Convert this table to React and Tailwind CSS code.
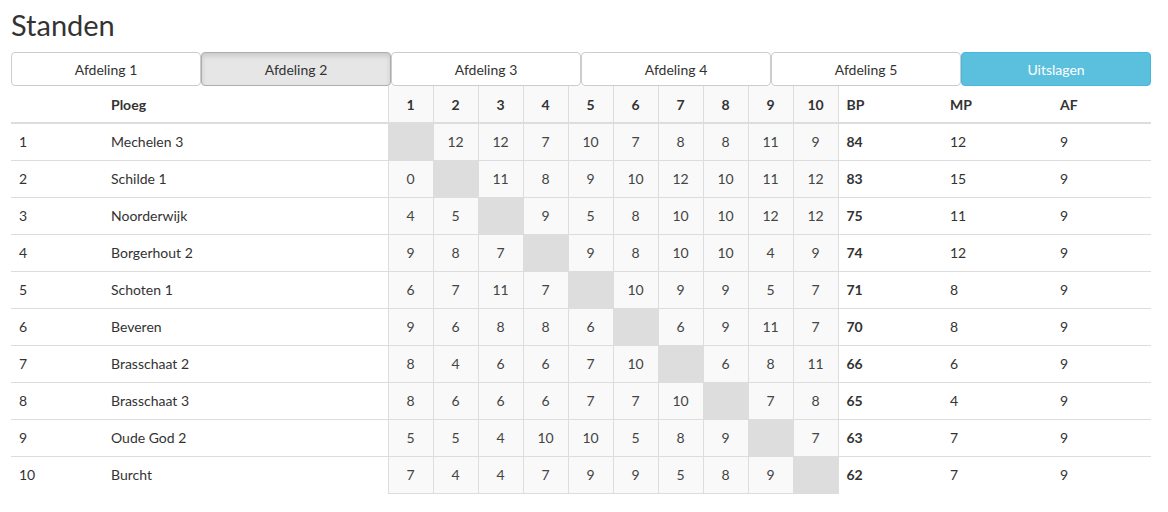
import React from 'react';

const tabs = ['Afdeling 1', 'Afdeling 2', 'Afdeling 3', 'Afdeling 4', 'Afdeling 5'];

const rows = [
  { nr: 1, ploeg: 'Mechelen 3', s: [null, 12, 12, 7, 10, 7, 8, 8, 11, 9], bp: 84, mp: 12, af: 9 },
  { nr: 2, ploeg: 'Schilde 1', s: [0, null, 11, 8, 9, 10, 12, 10, 11, 12], bp: 83, mp: 15, af: 9 },
  { nr: 3, ploeg: 'Noorderwijk', s: [4, 5, null, 9, 5, 8, 10, 10, 12, 12], bp: 75, mp: 11, af: 9 },
  { nr: 4, ploeg: 'Borgerhout 2', s: [9, 8, 7, null, 9, 8, 10, 10, 4, 9], bp: 74, mp: 12, af: 9 },
  { nr: 5, ploeg: 'Schoten 1', s: [6, 7, 11, 7, null, 10, 9, 9, 5, 7], bp: 71, mp: 8, af: 9 },
  { nr: 6, ploeg: 'Beveren', s: [9, 6, 8, 8, 6, null, 6, 9, 11, 7], bp: 70, mp: 8, af: 9 },
  { nr: 7, ploeg: 'Brasschaat 2', s: [8, 4, 6, 6, 7, 10, null, 6, 8, 11], bp: 66, mp: 6, af: 9 },
  { nr: 8, ploeg: 'Brasschaat 3', s: [8, 6, 6, 6, 7, 7, 10, null, 7, 8], bp: 65, mp: 4, af: 9 },
  { nr: 9, ploeg: 'Oude God 2', s: [5, 5, 4, 10, 10, 5, 8, 9, null, 7], bp: 63, mp: 7, af: 9 },
  { nr: 10, ploeg: 'Burcht', s: [7, 4, 4, 7, 9, 9, 5, 8, 9, null], bp: 62, mp: 7, af: 9 },
];

const cols = [1, 2, 3, 4, 5, 6, 7, 8, 9, 10];

export default function App() {
  return (
    <div className="bg-white px-[11px] pt-[6px] text-[#333] text-[14px]" style={{ fontFamily: 'Lato, "Open Sans", sans-serif' }}>
      <h1 className="text-[29px] leading-[38px] font-normal mb-[8px]">Standen</h1>

      {/* tabs */}
      <div className="flex w-[1140px]">
        {tabs.map((t, i) => (
          <div
            key={t}
            className={
              i === 1
                ? 'w-[190px] h-[34px] flex items-center justify-center rounded-[4px] border border-[#adadad] bg-[#e6e6e6] shadow-[inset_0_3px_5px_rgba(0,0,0,0.125)]'
                : 'w-[190px] h-[34px] flex items-center justify-center rounded-[4px] border border-[#ccc] bg-white'
            }
          >
            {t}
          </div>
        ))}
        <div className="w-[190px] h-[34px] flex items-center justify-center rounded-[4px] border border-[#46b8da] bg-[#5bc0de] text-white">
          Uitslagen
        </div>
      </div>

      <table className="table-fixed border-collapse w-[1140px]">
        <colgroup>
          <col className="w-[92px]" />
          <col className="w-[285px]" />
          {cols.map((c) => (
            <col key={c} className="w-[45px]" />
          ))}
          <col className="w-[104px]" />
          <col className="w-[110px]" />
          <col className="w-[99px]" />
        </colgroup>
        <thead>
          <tr className="h-[37px] border-b-2 border-[#ddd] font-bold">
            <th className="px-2 text-left"></th>
            <th className="px-2 text-left">Ploeg</th>
            {cols.map((c) => (
              <th key={c} className="text-center bg-[#f9f9f9] border-x border-[#ddd]">{c}</th>
            ))}
            <th className="px-2 text-left">BP</th>
            <th className="px-2 text-left">MP</th>
            <th className="px-2 text-left">AF</th>
          </tr>
        </thead>
        <tbody>
          {rows.map((r) => (
            <tr key={r.nr} className="h-[37px] border-t border-[#ddd]">
              <td className="px-2">{r.nr}</td>
              <td className="px-2">{r.ploeg}</td>
              {r.s.map((v, i) => (
                <td
                  key={i}
                  className={
                    v === null
                      ? 'bg-[#ddd] border border-[#ddd]'
                      : 'text-center bg-[#f9f9f9] border border-[#ddd] text-[#444]'
                  }
                >
                  {v}
                </td>
              ))}
              <td className="px-2 font-bold">{r.bp}</td>
              <td className="px-2">{r.mp}</td>
              <td className="px-2">{r.af}</td>
            </tr>
          ))}
        </tbody>
      </table>
    </div>
  );
}
